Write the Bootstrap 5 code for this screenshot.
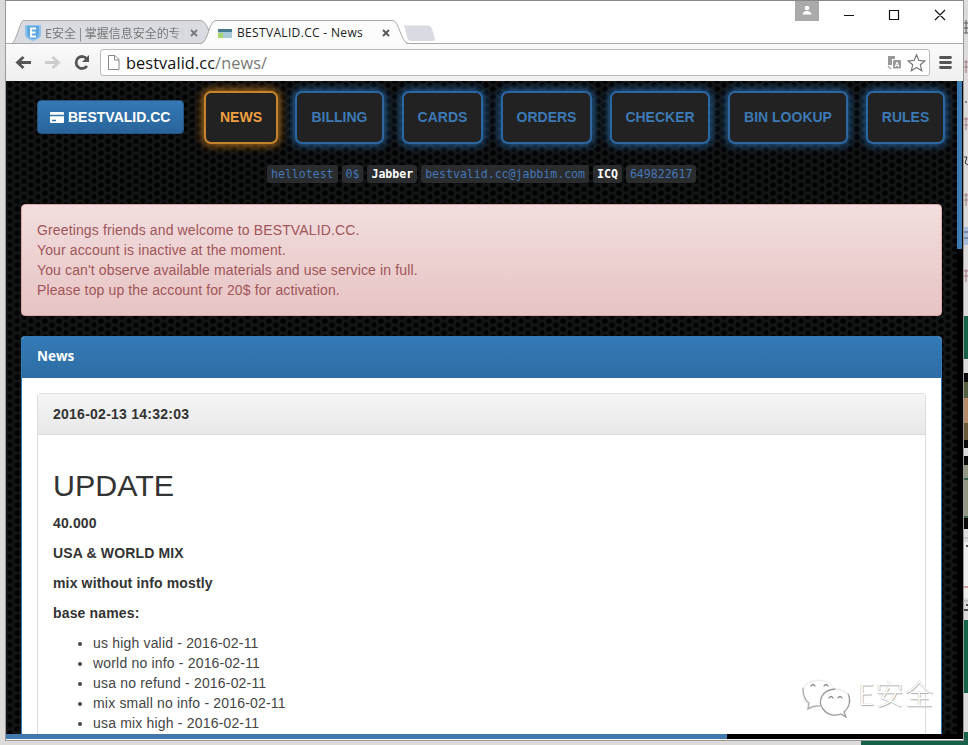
<!DOCTYPE html>
<html lang="en">
<head>
<meta charset="utf-8">
<title>BESTVALID.CC - News</title>
<link href="https://cdn.jsdelivr.net/npm/bootstrap@5.3.0/dist/css/bootstrap.min.css" rel="stylesheet">
<style>
body{width:968px;height:745px;background:#dcdbda;font:14px/20px "Liberation Sans",Arial,sans-serif;color:#333}
.win{width:959px;height:741px;margin-left:5px;border:1px solid #999;border-top-color:#888;background:#fff}
.side{width:4px}
.titlebar{height:43px;position:relative}
.tabshapes{position:absolute;left:0;top:0}
.tabrow{position:absolute;top:19px;height:25px;font:12px/25px "Open Sans","Noto Sans CJK SC",sans-serif}
.tab-a{width:156px;left:39px;color:#777;font-family:"Noto Sans CJK SC",sans-serif;-webkit-mask-image:linear-gradient(90deg,#000 82%,transparent 89%)}
.tab-b{left:231px;color:#222;letter-spacing:.33px}
.toolbar{height:37px;background:linear-gradient(#fafafa,#efefef);padding:5px 7px 5px 0}
.omni{width:830px;height:27px;border:1px solid #bbb;border-radius:3px;background:#fff;font:16.3px/26px "Open Sans",sans-serif;padding-left:25px;color:#777;letter-spacing:.1px}
.omni b{font-weight:400;color:#111}
.view{width:951px;height:653px;background-color:#050506;
background-image:radial-gradient(circle at 4px 4px,#020203 0 2.3px,transparent 3.2px),radial-gradient(circle at 11px 0,#020203 0 2.3px,transparent 3.2px),radial-gradient(circle at 11px 8px,#020203 0 2.3px,transparent 3.2px),linear-gradient(#131415,#131415);background-size:14px 8px}
.menu{height:72px;padding:10px 0 0 31px}
.brandbtn{width:147px;height:34px;margin:9px 20px 0 0;padding:0 0 0 12px;border-radius:4px;background:linear-gradient(#3479b6,#29649a);border:1px solid #245580;color:#fff;font-weight:700;line-height:32px;gap:4px}
.glow{height:53px;border:2px solid #2b66a0;border-radius:7px;background:#222;color:#3c79b5;font-weight:700;line-height:49px;text-align:center;text-decoration:none;box-shadow:0 0 8px 2px #265f94}
.glow.on{border-color:#c4832c;color:#f0a040;box-shadow:0 0 8px 2px #a56a1c}
.chips{height:18px;margin-top:12px;padding-left:261px;font:11.6px/18px "DejaVu Sans Mono",monospace;letter-spacing:-.03px;color:#4377b5}
.chips span{background:#2b2c2e;border-radius:3px;padding:0 4px;white-space:nowrap}
.chips .who{color:#fff;font-weight:700}
.notice{margin:21px 15px 0 15px;height:112px;padding:15px;border:1px solid #dca7a7;border-radius:4px;background:linear-gradient(#f2dede,#e7c3c3);color:#a05559;letter-spacing:.13px}
.panelx{margin:20px 15px 0 15px;height:399px;border:1px solid #337ab7;border-bottom:0;border-radius:4px 4px 0 0;background:#fff;overflow:hidden}
.panelx>h3{height:41px;margin:0;padding-left:15px;font:700 13.500px/39px "Open Sans",sans-serif;background:linear-gradient(#337ab7,#2e6da4);color:#fff}
.post{margin:15px 15px 0;height:345px;border:1px solid #ddd;border-bottom:0;border-radius:4px 4px 0 0}
.post>h4{height:41px;margin:0;padding-left:15px;font-size:14px;font-weight:700;line-height:40px;letter-spacing:.25px;background:linear-gradient(#f5f5f5,#e8e8e8);border-bottom:1px solid #ddd}
.post .txt{padding:35px 15px 0}
.txt h1{font-size:30.400px;line-height:33px;margin:0 0 10px;font-weight:400;position:relative;top:-1px}
.txt p{margin:0 0 10px;font-weight:700;letter-spacing:.15px}
.txt ul{padding-left:40px;margin:0;color:#444;letter-spacing:.18px}
.vbar{width:6px;height:653px;background:#000}
.vbar i{width:5px;height:168px;background:#3c7ab2}
.hbar{height:5px;background:#000}
.hbar i{width:721px;height:5px;background:#4179ae}
.strip{width:5px;height:741px;overflow:hidden}
.wmk{position:absolute;left:800px;top:674px}
.wmt{position:absolute;left:858px;top:674px;font:300 28.500px/38px "Noto Sans CJK SC",sans-serif;color:#fff;text-shadow:.7px .7px .7px #aaa,-.5px -.5px 0 #ccc;white-space:nowrap;letter-spacing:1px}
.desk{position:absolute;left:861px;top:741px;width:107px;height:4px;background:#176049}
</style>
<script src="https://cdn.jsdelivr.net/npm/bootstrap@5.3.0/dist/js/bootstrap.bundle.min.js"></script>
</head>
<body class="overflow-hidden position-relative">
<div class="d-flex">
<div class="win flex-shrink-0">
  <div class="titlebar">
    <svg class="tabshapes" width="957" height="43" viewBox="6 1 957 43" fill="none">
      <path d="M6 43.5H209M406 43.5H963" stroke="#aaa"/>
      <path d="M12 43.5C16 42 20 22 23 20.5H201C205 21 208 28 210 33L204 43.5Z" fill="#d9dbe0" stroke="#aaa"/>
      <path d="M201 44C208 43 209 24 215 20.5H393C399 21 401 44 408 44Z" fill="#fcfcfc"/>
      <path d="M201 43.5C208 42 209 22 215 20.5H393C399 21 401 42 408 43.5" stroke="#aaa"/>
      <path d="M404 25.5H429Q431 26 432 29L435 39Q435 41 433 41H411Q408 41 407 37Z" fill="#d8dbe1"/>
      <path d="M25 25H41V35Q40 39 33 41Q26 39 25 35Z" fill="#8cc3ea"/><path d="M27 26H39V35Q38 38 33 39Q28 38 27 35Z" fill="#5fa8df"/><path d="M36 28.500H31V36.500H36M31 32.500H35.500" stroke="#fff" stroke-width="1.800"/>
      <path d="M191 30l6 6m0-6l-6 6" stroke="#777" stroke-width="1.800"/><path d="M383 30l6 6m0-6l-6 6" stroke="#555" stroke-width="1.800"/>
      <rect x="218" y="29" width="14" height="9" fill="#a9cbd8"/><rect x="218" y="29" width="14" height="3" fill="#467a8e"/><rect x="218" y="33" width="5" height="5" fill="#a8d36f"/>
      <rect x="795" y="1" width="24" height="20" fill="#aaa"/><circle cx="807" cy="8" r="2.300" fill="#fff"/><path d="M802.500 14.500Q803 11 807 11T811.500 14.500Z" fill="#fff"/>
      <path d="M844 15.500H854M889.500 10.500H898.500V19.500H889.500ZM935 10L945 20M945 10L935 20" stroke="#111" stroke-width="1.200"/>
    </svg>
    <span class="tabrow tab-a text-nowrap overflow-hidden">E安全 | 掌握信息安全的专家</span>
    <span class="tabrow tab-b text-nowrap">BESTVALID.CC - News</span>
  </div>
  <div class="toolbar d-flex">
    <svg class="flex-shrink-0" width="94" height="27" viewBox="6 49 94 27" fill="none" stroke-width="2.800"><path d="M31 62.500H18M23.500 57L17.500 62.500L23.500 68" stroke="#555"/><path d="M45 62.500H58M52.500 57L58.500 62.500L52.500 68" stroke="#ccc"/><path d="M87 59A6 6 0 1 0 87 66" stroke="#555"/><path d="M89 55V62H82Z" fill="#555"/></svg>
    <div class="omni position-relative flex-shrink-0"><b>bestvalid.cc</b>/news/
      <svg class="position-absolute top-0 start-0" width="828" height="25" viewBox="101 50 828 25" fill="none">
        <path d="M108.500 55.500H115L119 59.500V69.500H108.500ZM114.500 55.500V60H119" stroke="#888"/>
        <path d="M888 56H895V59H892V65H888Z" fill="#999"/><rect x="893" y="60" width="8" height="8.500" rx="1" fill="#999"/><path d="M895 67L897 62L899 67M895.800 65.500H898.500" stroke="#fff"/><path d="M888 66L891 69" stroke="#aaa" stroke-width="1.500"/>
        <path d="M916.500 54.800L918.900 60.400L924.800 60.900L920.300 64.800L921.700 70.700L916.500 67.500L911.300 70.700L912.700 64.800L908.200 60.900L914.100 60.400Z" stroke="#777" stroke-width="1.200"/>
      </svg>
    </div>
    <svg class="ms-auto flex-shrink-0" width="20" height="27" viewBox="936 49 20 27"><path d="M940.500 57.500H950.500M940.500 62.500H950.500M940.500 67.500H950.500" stroke="#555" stroke-width="2.800" stroke-linecap="round"/></svg>
  </div>
  <div class="d-flex">
    <main class="view overflow-hidden">
      <nav class="menu d-flex">
        <a class="brandbtn d-flex align-items-center text-decoration-none flex-shrink-0"><svg width="14" height="11" viewBox="0 0 14 11"><rect width="14" height="11" rx="1" fill="#fff"/><path d="M0 3.500H14M2 8.500H6" stroke="#3773a9" stroke-width="1.500"/></svg><span>BESTVALID.CC</span></a>
        <div class="d-flex flex-shrink-0">
          <a class="glow on" style="width:74px;margin-right:17px">NEWS</a>
          <a class="glow" style="width:89px;margin-right:18px">BILLING</a>
          <a class="glow" style="width:81px;margin-right:18px">CARDS</a>
          <a class="glow" style="width:91px;margin-right:18px">ORDERS</a>
          <a class="glow" style="width:100px;margin-right:18px">CHECKER</a>
          <a class="glow" style="width:120px;margin-right:18px">BIN LOOKUP</a>
          <a class="glow" style="width:79px">RULES</a>
        </div>
      </nav>
      <div class="chips d-flex gap-1"><span>hellotest</span><span>0$</span><span class="who">Jabber</span><span>bestvalid.cc@jabbim.com</span><span class="who">ICQ</span><span>649822617</span></div>
      <div class="notice">Greetings friends and welcome to BESTVALID.CC.<br>Your account is inactive at the moment.<br>You can't observe available materials and use service in full.<br>Please top up the account for 20$ for activation.</div>
      <section class="panelx">
        <h3>News</h3>
        <article class="post">
          <h4>2016-02-13 14:32:03</h4>
          <div class="txt">
            <h1>UPDATE</h1>
            <p>40.000</p><p>USA &amp; WORLD MIX</p><p>mix without info mostly</p><p>base names:</p>
            <ul><li>us high valid - 2016-02-11</li><li>world no info - 2016-02-11</li><li>usa no refund - 2016-02-11</li><li>mix small no info - 2016-02-11</li><li>usa mix high - 2016-02-11</li></ul>
          </div>
        </article>
      </section>
    </main>
    <div class="vbar"><i class="d-block"></i></div>
  </div>
  <div class="hbar"><i class="d-block"></i></div>
</div>
<svg class="strip" width="4" height="741" viewBox="964 0 4 741" fill="none">
  <path d="M964 23H968M966 20V33M964 28H968M964 33H968" stroke="#555"/>
  <path d="M964 62H968M964 67H968M966 60V73M964 119H968M964 125H968M966 117V130M964 195H968M964 200H968M966 193V206M964 271H968M964 276H968M966 269V282" stroke="#a27780"/>
  <path d="M965 102h2M964 157H967L965 163L968 165" stroke="#333"/>
  <rect x="964" y="227" width="4" height="18" fill="#a9bddb"/><path d="M964 232H968M964 238H968" stroke="#456"/>
  <rect x="964" y="316" width="4" height="43" fill="#176049"/><rect x="964" y="373" width="4" height="75" fill="#0a0a0a"/><rect x="964" y="382" width="4" height="16" fill="#536142"/><rect x="964" y="398" width="4" height="25" fill="#b58a68"/><rect x="964" y="423" width="4" height="17" fill="#695a3c"/>
  <rect x="964" y="456" width="4" height="73" fill="#0a0a0a"/><rect x="964" y="465" width="4" height="52" fill="#929783"/><path d="M964 479H968M964 517H968" stroke="#3c604d" stroke-width="2"/>
  <path d="M964 538H968M964 601H968" stroke="#aaa"/><rect x="964" y="542" width="4" height="56" fill="#eee"/><path d="M966 546H968M966 605H968M964 610H968" stroke="#222" stroke-width="1.500"/><path d="M964 587H968" stroke="#c99" stroke-width="2"/>
  <rect x="964" y="620" width="4" height="73" fill="#176049"/><rect x="964" y="732" width="4" height="9" fill="#176049"/>
</svg>
</div>
<div class="desk"></div>
<svg class="wmk" width="54" height="46" viewBox="800 674 54 46" fill="none" stroke-linecap="round">
  <path d="M820 706Q813 708 807 709L808 704C801 698 801 688 808 683C818 677 833 682 834 690" stroke="#eee" stroke-width="1.300"/><path d="M803 688C803 697 806 701 809 703L808 709Q813 705 820 706" stroke="#aaa" stroke-width="1.200"/>
  <path d="M835 689C822 690 817 701 823 709C828 716 836 716 841 714L846 717L844 712C850 707 851 699 848 694" stroke="#999" stroke-width="1.300"/><path d="M835 689Q844 689 848 695" stroke="#ddd"/>
  <path d="M811 686Q813 683 815 686M824 686Q826 683 828 686M829 698Q831 695 833 698M838 698Q840 695 842 698" stroke="#888" stroke-width="1.300"/>
</svg>
<div class="wmt">E安全</div>
</body>
</html>
